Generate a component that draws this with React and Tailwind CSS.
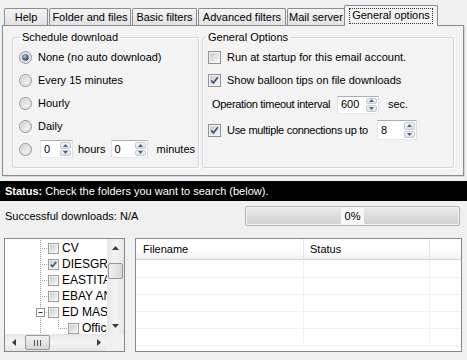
import { useId } from "react";

function Radio({ checked }) {
  const id = useId().replace(/:/g, "");
  return (
    <svg width="13" height="13" viewBox="0 0 13 13" className="shrink-0">
      <defs>
        <linearGradient id={"a" + id} x1="0" y1="0" x2="1" y2="1">
          <stop offset="0" stopColor="#d2d2d2" />
          <stop offset="1" stopColor="#fbfbfb" />
        </linearGradient>
        <radialGradient id={"b" + id} cx="0.4" cy="0.35" r="0.75">
          <stop offset="0" stopColor="#b9d2e6" />
          <stop offset="0.45" stopColor="#52759b" />
          <stop offset="1" stopColor="#243f63" />
        </radialGradient>
      </defs>
      <circle cx="6.5" cy="6.5" r="6" fill="#f4f4f4" stroke="#8f8f8f" />
      <circle cx="6.5" cy="6.5" r="4.5" fill={`url(#a${id})`} stroke="#cfcfcf" strokeWidth="0.8" />
      {checked && <circle cx="6.5" cy="6.5" r="3.2" fill={`url(#b${id})`} />}
    </svg>
  );
}

function Check({ checked, size = 13 }) {
  const id = useId().replace(/:/g, "");
  return (
    <svg width={size} height={size} viewBox="0 0 13 13" className="shrink-0">
      <defs>
        <linearGradient id={"c" + id} x1="0" y1="0" x2="1" y2="1">
          <stop offset="0" stopColor="#cbcbcb" />
          <stop offset="1" stopColor="#f6f6f6" />
        </linearGradient>
      </defs>
      <rect x="0.5" y="0.5" width="12" height="12" fill="#f6f6f6" stroke="#8e8f8f" />
      <rect x="2" y="2" width="9" height="9" fill={`url(#c${id})`} />
      {checked && (
        <path d="M3.2 6.4 L5.4 8.9 L9.9 3.2" fill="none" stroke="#3d5285" strokeWidth="1.7" />
      )}
    </svg>
  );
}

function Arrow({ dir }) {
  return (
    <svg width="5" height="3" viewBox="0 0 5 3">
      {dir === "up" ? <path d="M0 3 L2.5 0 L5 3 Z" fill="#4d6185" /> : <path d="M0 0 L2.5 3 L5 0 Z" fill="#4d6185" />}
    </svg>
  );
}

function Spin({ value, box }) {
  return (
    <div className={`${box} shrink-0 flex bg-white border border-[#abadb3] border-l-[#e2e3ea] border-r-[#dbdfe6] border-b-[#e3e9ef]`}>
      <div className="flex-1 flex items-center pl-[3px]">{value}</div>
      <div className="w-[13px] flex flex-col gap-px p-px">
        <div className="flex-1 flex items-center justify-center rounded-[2px] border border-[#c3cad4] bg-linear-to-b from-[#f3f6f9] to-[#dde3ea]">
          <Arrow dir="up" />
        </div>
        <div className="flex-1 flex items-center justify-center rounded-[2px] border border-[#c3cad4] bg-linear-to-b from-[#f3f6f9] to-[#dde3ea]">
          <Arrow dir="down" />
        </div>
      </div>
    </div>
  );
}

function Tab({ w, children }) {
  return (
    <div className={`${w} h-[18px] flex items-center justify-center whitespace-nowrap border border-b-0 border-[#898c95] rounded-t-[2px] bg-linear-to-b from-[#f4f4f4] to-[#e1e1e1]`}>
      {children}
    </div>
  );
}

function SArrow({ dir }) {
  const d = {
    up: "M0 4 L3.5 0 L7 4 Z",
    down: "M0 0 L3.5 4 L7 0 Z",
    left: "M4 0 L0 3.5 L4 7 Z",
    right: "M0 0 L4 3.5 L0 7 Z",
  }[dir];
  const vert = dir === "up" || dir === "down";
  return (
    <svg width={vert ? 7 : 4} height={vert ? 4 : 7} viewBox={vert ? "0 0 7 4" : "0 0 4 7"}>
      <path d={d} fill="#3c3c3c" />
    </svg>
  );
}

function TreeRow({ label, checked, kind }) {
  const dot = { stroke: "#a0a0a0", strokeDasharray: "1 1", strokeWidth: 1 };
  const gw = kind === "child" ? 63 : 43;
  return (
    <div className="h-[16px] flex items-center whitespace-nowrap">
      <svg width={gw} height="16" viewBox={`0 0 ${gw} 16`} className="shrink-0">
        <line x1="35.5" y1="0" x2="35.5" y2="16" {...dot} />
        {kind === "leaf" && <line x1="37" y1="8.5" x2="43" y2="8.5" {...dot} />}
        {kind === "minus" && (
          <g>
            <line x1="41" y1="8.5" x2="43" y2="8.5" {...dot} />
            <rect x="31.5" y="4.5" width="8" height="8" fill="#fff" stroke="#919191" />
            <line x1="33.5" y1="8.5" x2="37.5" y2="8.5" stroke="#303030" />
          </g>
        )}
        {kind === "child" && (
          <g>
            <line x1="53.5" y1="0" x2="53.5" y2="8.5" {...dot} />
            <line x1="55" y1="8.5" x2="63" y2="8.5" {...dot} />
          </g>
        )}
      </svg>
      <Check checked={checked} size={11} />
      <span className="ml-[3px] text-[12px]">{label}</span>
    </div>
  );
}

export default function App() {
  const rows = [0, 1, 2, 3, 4];
  return (
    <div className="w-[467px] h-[360px] bg-[#f0f0f0] overflow-hidden flex flex-col font-['Liberation_Sans',Arial,sans-serif] text-[11px] leading-[13px] text-black">
      {/* Tab strip */}
      <div className="flex items-end gap-px h-[21px] mt-[5px] pl-[4px]">
        <Tab w="w-[44px]">Help</Tab>
        <Tab w="w-[82px]">Folder and files</Tab>
        <Tab w="w-[65px]">Basic filters</Tab>
        <Tab w="w-[88px]">Advanced filters</Tab>
        <Tab w="w-[58px]">Mail server</Tab>
        <div className="relative z-10 -ml-[2px] w-[94px] h-[21px] flex items-center justify-center border border-b-0 border-[#898c95] rounded-t-[2px] bg-[#f3f3f3]">
          <span className="border border-dotted border-[#333] px-[2px] pb-px whitespace-nowrap">General options</span>
        </div>
      </div>

      {/* Tab panel */}
      <div className="-mt-px ml-[2px] w-[462px] h-[151px] border border-[#898c95] bg-[#f3f3f3] flex gap-[3px] pl-[9px] pt-[5px] pb-[7px] shadow-[1px_1px_0_#d8d8d8]">
        <fieldset className="w-[187px] border border-[#d0d5d9] rounded-[3px] shadow-[inset_1px_1px_0_#fff,1px_1px_0_#fff]">
          <legend className="ml-[7px] px-[2px]">Schedule download</legend>
          <div className="pt-[2px] pl-[6px] flex flex-col whitespace-nowrap">
            <div className="h-[23px] flex items-center gap-[6px]"><Radio checked /><span>None (no auto download)</span></div>
            <div className="h-[23px] flex items-center gap-[6px]"><Radio /><span>Every 15 minutes</span></div>
            <div className="h-[23px] flex items-center gap-[6px]"><Radio /><span>Hourly</span></div>
            <div className="h-[23px] flex items-center gap-[6px]"><Radio /><span>Daily</span></div>
            <div className="h-[22px] flex items-center">
              <Radio />
              <div className="ml-[8px]"><Spin value="0" box="w-[33px] h-[18px]" /></div>
              <span className="ml-[5px]">hours</span>
              <div className="ml-[5px]"><Spin value="0" box="w-[37px] h-[18px]" /></div>
              <span className="ml-[9px]">minutes</span>
            </div>
          </div>
        </fieldset>

        <fieldset className="w-[252px] border border-[#d0d5d9] rounded-[3px] shadow-[inset_1px_1px_0_#fff,1px_1px_0_#fff]">
          <legend className="ml-[3px] px-[2px]">General Options</legend>
          <div className="pt-[2px] pl-[5px] flex flex-col whitespace-nowrap">
            <div className="h-[23px] flex items-center gap-[6px]"><Check /><span>Run at startup for this email account.</span></div>
            <div className="h-[23px] flex items-center gap-[6px]"><Check checked /><span>Show balloon tips on file downloads</span></div>
            <div className="h-[25px] flex items-center pl-[4px]">
              <span className="w-[125px] shrink-0 tracking-[-0.3px]">Operation timeout interval</span>
              <Spin value="600" box="w-[42px] h-[18px]" />
              <span className="ml-[9px]">sec.</span>
            </div>
            <div className="h-[26px] flex items-center">
              <Check checked />
              <span className="ml-[6px] w-[150px] shrink-0 tracking-[-0.3px]">Use multiple connections up to</span>
              <Spin value="8" box="w-[40px] h-[20px]" />
            </div>
          </div>
        </fieldset>
      </div>

      {/* Status bar */}
      <div className="mt-[5px] h-[20px] bg-black text-white flex items-center pl-[5px] whitespace-nowrap">
        <span className="font-bold">Status:</span>
        <span className="ml-[3px]">Check the folders you want to search (below).</span>
      </div>

      {/* Downloads + progress */}
      <div className="mt-[5px] h-[20px] flex items-center pl-[5px] whitespace-nowrap">
        <span>Successful downloads: N/A</span>
        <div className="ml-auto mr-[7px] w-[215px] h-[20px] rounded-[2px] border border-[#b2b2b2] bg-linear-to-b from-[#ececec] via-[#dcdcdc] to-[#d2d2d2] shadow-[inset_0_0_0_1px_#f4f4f4] flex justify-center">
          <span className="bg-[#f7f7f7] px-[4px] flex items-center">0%</span>
        </div>
      </div>

      {/* Lower area */}
      <div className="mt-[12px] h-[114px] flex pl-[4px] gap-[10px]">
        {/* Tree */}
        <div className="w-[121px] h-[114px] border border-[#828790] bg-white flex flex-col">
          <div className="flex h-[95px]">
            <div className="w-[102px] overflow-hidden pt-px">
              <TreeRow label="CV" kind="leaf" />
              <TreeRow label="DIESGROUP" kind="leaf" checked />
              <TreeRow label="EASTITALY" kind="leaf" />
              <TreeRow label="EBAY AND" kind="leaf" />
              <TreeRow label="ED MASTERS" kind="minus" />
              <TreeRow label="Office" kind="child" />
            </div>
            <div className="w-[17px] flex flex-col bg-linear-to-r from-[#e6e6e6] via-[#f4f4f4] to-[#e6e6e6]">
              <div className="h-[17px] flex items-center justify-center"><SArrow dir="up" /></div>
              <div className="flex-1">
                <div className="mt-[7px] mx-px h-[16px] rounded-[2px] border border-[#979797] bg-linear-to-r from-[#f2f2f2] to-[#d6d6d6]" />
              </div>
              <div className="h-[17px] flex items-center justify-center"><SArrow dir="down" /></div>
            </div>
          </div>
          <div className="flex h-[17px]">
            <div className="w-[102px] flex bg-linear-to-b from-[#e6e6e6] via-[#f4f4f4] to-[#e6e6e6]">
              <div className="w-[17px] flex items-center justify-center"><SArrow dir="left" /></div>
              <div className="flex-1 flex items-center">
                <div className="ml-[3px] w-[25px] h-[15px] rounded-[2px] border border-[#979797] bg-linear-to-b from-[#f2f2f2] to-[#d6d6d6] flex items-center justify-center gap-[2px]">
                  <span className="w-px h-[6px] bg-[#555]" />
                  <span className="w-px h-[6px] bg-[#555]" />
                  <span className="w-px h-[6px] bg-[#555]" />
                </div>
              </div>
              <div className="w-[17px] flex items-center justify-center"><SArrow dir="right" /></div>
            </div>
            <div className="w-[17px] bg-[#f0f0f0]" />
          </div>
        </div>

        {/* List view */}
        <div className="w-[327px] h-[114px] border border-[#828790] bg-white flex flex-col overflow-hidden">
          <div className="h-[21px] flex border-b border-[#d5d5d5] bg-linear-to-b from-[#ffffff] via-[#ffffff] to-[#f1f2f4] shrink-0">
            <div className="w-[168px] border-r border-[#e5e5e5] flex items-center pl-[7px]">Filename</div>
            <div className="w-[126px] border-r border-[#e5e5e5] flex items-center pl-[6px]">Status</div>
            <div className="flex-1" />
          </div>
          <div className="flex flex-col pt-px">
            {rows.map((r) => (
              <div key={r} className="h-[17px] flex border-b border-[#f0f0f0]">
                <div className="w-[168px] border-r border-[#f0f0f0]" />
                <div className="w-[126px] border-r border-[#f0f0f0]" />
                <div className="flex-1" />
              </div>
            ))}
          </div>
        </div>
      </div>
    </div>
  );
}
